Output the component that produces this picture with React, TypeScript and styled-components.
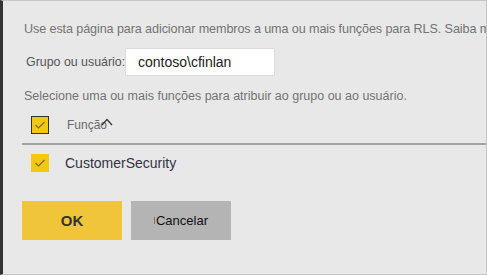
import React from "react";
import styled, { createGlobalStyle } from "styled-components";

const Global = createGlobalStyle`
  html, body { margin: 0; padding: 0; background: #e8e8e8; }
  * { box-sizing: border-box; }
`;

const Panel = styled.div`
  width: 487px;
  height: 275px;
  background: #e8e8e8;
  border-left: 3px solid #333333;
  border-top: 1px solid #c6c6c6;
  border-right: 1px solid #c6c6c6;
  border-bottom: 1px solid #c6c6c6;
  overflow: hidden;
  font-family: "Liberation Sans", Arial, sans-serif;
  display: flex;
  flex-direction: column;
  padding: 20px 0 0 19px;
`;

const Intro = styled.p`
  margin: 0;
  padding-left: 2px;
  font-size: 12.6px;
  letter-spacing: -0.1px;
  line-height: 16px;
  color: #737373;
  white-space: nowrap;
`;

const FieldRow = styled.div`
  display: flex;
  align-items: center;
  margin-top: 11px;
  padding-left: 4px;
`;

const Label = styled.label`
  font-size: 12.4px;
  color: #555555;
  width: 99px;
  white-space: nowrap;
`;

const Input = styled.div`
  width: 150px;
  height: 28px;
  background: #ffffff;
  border: 1px solid #dcdcdc;
  font-size: 14px;
  color: #222222;
  display: flex;
  align-items: center;
  padding-left: 12px;
`;

const Hint = styled.p`
  margin: 12px 0 0 0;
  padding-left: 2px;
  font-size: 12.5px;
  line-height: 16px;
  color: #737373;
  white-space: nowrap;
`;

const Row = styled.div<{ $header?: boolean }>`
  display: flex;
  align-items: center;
  height: ${(p) => (p.$header ? "41px" : "36px")};
  padding-left: 9px;
  padding-top: ${(p) => (p.$header ? "3px" : "0")};
  border-bottom: ${(p) => (p.$header ? "2px solid #a3a3a3" : "none")};
  margin-right: -1px;
`;

const Check = styled.span<{ $bordered?: boolean }>`
  width: 18px;
  height: 18px;
  background: #f2c811;
  border: ${(p) => (p.$bordered ? "1px solid #333333" : "none")};
  display: flex;
  align-items: center;
  justify-content: center;
  flex: none;
`;

const HeaderText = styled.span`
  margin-left: 18px;
  font-size: 12px;
  color: #6a6a6a;
  position: relative;
`;

const Caret = styled.svg`
  position: absolute;
  left: 34px;
  top: 0px;
`;

const CellText = styled.span`
  margin-left: 16px;
  font-size: 14px;
  color: #333344;
`;

const Buttons = styled.div`
  display: flex;
  gap: 9px;
  margin-top: 20px;
`;

const Button = styled.button<{ $primary?: boolean }>`
  width: 100px;
  height: 39px;
  border: none;
  padding: 0;
  font-family: "Liberation Sans", Arial, sans-serif;
  background: ${(p) => (p.$primary ? "#f0c53a" : "#b4b4b4")};
  color: ${(p) => (p.$primary ? "#333333" : "#111111")};
  font-size: ${(p) => (p.$primary ? "15px" : "13px")};
  font-weight: ${(p) => (p.$primary ? 700 : 400)};
  display: flex;
  align-items: center;
  justify-content: center;
`;

const Mark = styled.span`
  display: inline-block;
  width: 1px;
  height: 7px;
  background: #b0602a;
  margin-right: 1px;
`;

const Tick = () => (
  <svg width="12" height="10" viewBox="0 0 12 10">
    <path d="M1.5 5 L4.5 8 L10.5 2" fill="none" stroke="#7a6a3a" strokeWidth="1.2" />
  </svg>
);

export default function App() {
  return (
    <>
      <Global />
      <Panel>
        <Intro>Use esta página para adicionar membros a uma ou mais funções para RLS. Saiba mais</Intro>
        <FieldRow>
          <Label>Grupo ou usuário:</Label>
          <Input>contoso\cfinlan</Input>
        </FieldRow>
        <Hint>Selecione uma ou mais funções para atribuir ao grupo ou ao usuário.</Hint>
        <Row $header>
          <Check $bordered>
            <Tick />
          </Check>
          <HeaderText>
            Função
            <Caret width="12" height="8" viewBox="0 0 12 8">
              <path d="M1 7 L6 1.5 L11 7" fill="none" stroke="#333" strokeWidth="1.2" />
            </Caret>
          </HeaderText>
        </Row>
        <Row>
          <Check>
            <Tick />
          </Check>
          <CellText>CustomerSecurity</CellText>
        </Row>
        <Buttons>
          <Button $primary>OK</Button>
          <Button>
            <Mark />
            Cancelar
          </Button>
        </Buttons>
      </Panel>
    </>
  );
}
